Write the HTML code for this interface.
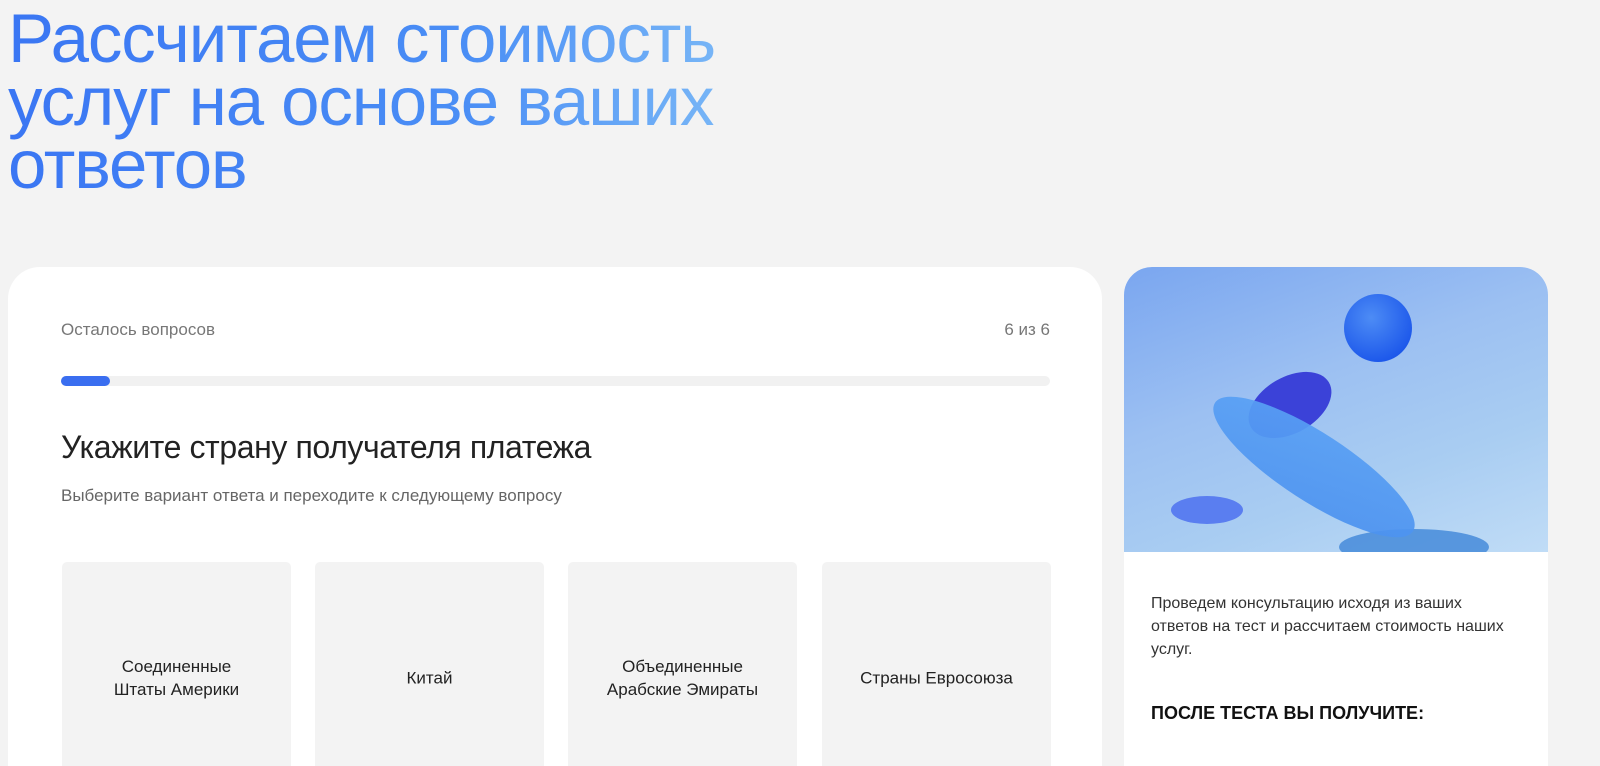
<!DOCTYPE html>
<html><head><meta charset="utf-8"><style>
*{margin:0;padding:0;box-sizing:border-box}
html,body{width:1600px;height:766px;overflow:hidden}
body{background:#f3f3f3;font-family:"Liberation Sans",sans-serif;position:relative}
h1{position:absolute;left:8px;top:7px;font-weight:400;font-size:69px;line-height:63px;letter-spacing:-1.1px;background:linear-gradient(90deg,#3a76f3 0%,#4a8ef5 60%,#80bdf7 100%);-webkit-background-clip:text;background-clip:text;color:transparent;width:760px}
.card{position:absolute;left:8px;top:267px;width:1094px;height:499px;background:#fff;border-radius:32px 32px 0 0;overflow:hidden}
.t{position:absolute;font-size:17px;color:#777}
.bar{position:absolute;left:53px;top:109px;width:989px;height:10px;border-radius:5px;background:#f1f1f1}
.bar i{position:absolute;left:0;top:0;width:49px;height:10px;border-radius:5px;background:#3a6ef0}
.q{position:absolute;left:53px;top:162px;font-size:32px;color:#222;letter-spacing:-0.4px}
.s{position:absolute;left:53px;top:219px;font-size:17px;color:#666}
.o{position:absolute;top:295px;width:229px;height:204px;background:#f3f3f3;border-radius:5px 5px 0 0;text-align:center;font-size:17px;line-height:23px;color:#222}
.o span{position:absolute;left:0;right:0;top:116px;transform:translateY(-50%)}
.side{position:absolute;left:1124px;top:267px;width:424px;height:499px;background:#fff;border-radius:28px 28px 0 0;overflow:hidden}
.img{position:absolute;left:0;top:0;width:424px;height:285px;background:linear-gradient(160deg,#7aa6f0 0%,#9cc0f2 40%,#a9cdf2 70%,#c0dcf6 100%)}
.p{position:absolute;left:27px;top:325px;font-size:16px;line-height:23px;color:#333;width:370px}
.h{position:absolute;left:27px;top:436px;font-size:18px;font-weight:700;color:#111}
</style></head><body>
<h1>Рассчитаем стоимость услуг на основе ваших ответов</h1>
<div class="card">
<div class="t" style="left:53px;top:53px">Осталось вопросов</div>
<div class="t" style="right:52px;top:53px">6 из 6</div>
<div class="bar"><i></i></div>
<div class="q">Укажите страну получателя платежа</div>
<div class="s">Выберите вариант ответа и переходите к следующему вопросу</div>
<div class="o" style="left:54px"><span>Соединенные<br>Штаты Америки</span></div>
<div class="o" style="left:307px"><span>Китай</span></div>
<div class="o" style="left:560px"><span>Объединенные<br>Арабские Эмираты</span></div>
<div class="o" style="left:814px"><span>Страны Евросоюза</span></div>
</div>
<div class="side">
<div class="img">
<svg width="424" height="285" viewBox="0 0 424 285">
<defs>
<radialGradient id="b" cx="0.4" cy="0.35" r="0.7"><stop offset="0" stop-color="#4d8cf5"/><stop offset="1" stop-color="#1a55ea"/></radialGradient>
<linearGradient id="d" x1="0" y1="0" x2="1" y2="1"><stop offset="0" stop-color="#5aa2f5"/><stop offset="1" stop-color="#4a90ef"/></linearGradient>
</defs>
<ellipse cx="290" cy="280" rx="75" ry="18" fill="#3f86d8" opacity="0.8"/>
<circle cx="254" cy="61" r="34" fill="url(#b)"/>
<ellipse cx="166" cy="138" rx="45" ry="28" transform="rotate(-30 166 138)" fill="#3b42d8"/>
<ellipse cx="190" cy="200" rx="118" ry="34" transform="rotate(33 190 200)" fill="url(#d)" opacity="0.92"/>
<ellipse cx="83" cy="243" rx="36" ry="14" fill="#5a7ef0"/>
</svg>
</div>
<div class="p">Проведем консультацию исходя из ваших ответов на тест и рассчитаем стоимость наших услуг.</div>
<div class="h">ПОСЛЕ ТЕСТА ВЫ ПОЛУЧИТЕ:</div>
</div>
</body></html>
